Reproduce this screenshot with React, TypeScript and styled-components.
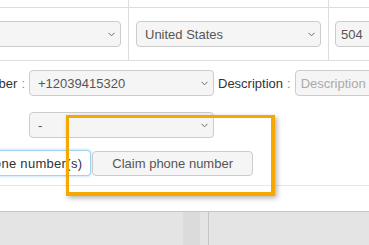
import React from "react";
import styled, { createGlobalStyle } from "styled-components";

const Global = createGlobalStyle`
  html, body { margin: 0; padding: 0; background: #ffffff; }
  body { font-family: "Liberation Sans", Arial, sans-serif; font-size: 13px; color: #333; overflow: hidden; }
  * { box-sizing: border-box; }
`;

const Page = styled.div`
  position: relative;
  width: 369px;
  height: 245px;
  overflow: hidden;
  display: flex;
  flex-direction: column;
`;

const Table = styled.div`
  display: grid;
  grid-template-columns: 208px 200px 200px;
  margin-left: -80px;
`;

const Cell = styled.div<{ $top?: boolean; $divided?: boolean; $pl?: number; $pr?: number }>`
  height: ${(p) => (p.$top ? 8 : 53)}px;
  border-bottom: 1px solid #dddddd;
  border-left: ${(p) => (p.$divided ? "1px solid #dddddd" : "none")};
  padding-left: ${(p) => p.$pl ?? 0}px;
  padding-right: ${(p) => p.$pr ?? 0}px;
  display: flex;
  align-items: center;
`;

const SelectWrap = styled.div<{ $w?: number }>`
  position: relative;
  flex: 0 0 auto;
  width: ${(p) => (p.$w ? `${p.$w}px` : "100%")};
  height: 26px;
`;

const Select = styled.select`
  appearance: none;
  -webkit-appearance: none;
  width: 100%;
  height: 100%;
  margin: 0;
  padding: 0 24px 0 8px;
  border: 1px solid #cccccc;
  border-radius: 4px;
  background: #f5f5f5;
  color: #555555;
  font-family: "Liberation Sans", Arial, sans-serif;
  font-size: 13px;
  outline: none;
`;

const Chevron = styled.svg`
  position: absolute;
  right: 6px;
  top: 50%;
  margin-top: -2px;
  width: 7px;
  height: 5px;
  pointer-events: none;
`;

const TextInput = styled.input<{ $w: number }>`
  flex: 0 0 auto;
  width: ${(p) => p.$w}px;
  height: 26px;
  margin: 0;
  padding: 0 5px;
  border: 1px solid #cccccc;
  border-radius: 4px;
  background: #f5f5f5;
  color: #555555;
  font-family: "Liberation Sans", Arial, sans-serif;
  font-size: 13px;
  outline: none;
  &::placeholder { color: #aaaaaa; }
`;

const Form = styled.div`
  padding-top: 9px;
  display: flex;
  flex-direction: column;
`;

const FormRow = styled.div<{ $mt?: number }>`
  display: flex;
  align-items: center;
  gap: 4px;
  margin-top: ${(p) => p.$mt ?? 0}px;
`;

const Label = styled.div<{ $w?: number }>`
  display: flex;
  justify-content: flex-end;
  flex: 0 0 auto;
  width: ${(p) => (p.$w ? `${p.$w}px` : "auto")};
  white-space: nowrap;
  color: #333333;
  font-size: 13px;
`;

const Colon = styled.span`
  color: #8a8a8a;
  margin-left: 4px;
`;

const ButtonRow = styled.div`
  display: flex;
  justify-content: flex-end;
  align-items: center;
  width: 253px;
  gap: 1px;
  margin-top: 12px;
  height: 26px;
`;

const Button = styled.button<{ $focused?: boolean }>`
  flex: 0 0 auto;
  height: ${(p) => (p.$focused ? 26 : 25)}px;
  margin: 0;
  padding: ${(p) => (p.$focused ? "0 8px 0 12px" : "0 19px")};
  border: 1px solid ${(p) => (p.$focused ? "#9fd3ef" : "#cccccc")};
  border-radius: 4px;
  background: ${(p) => (p.$focused ? "#ffffff" : "#f5f5f5")};
  box-shadow: ${(p) => (p.$focused ? "0 0 3px rgba(102,175,233,0.6)" : "none")};
  color: ${(p) => (p.$focused ? "#333333" : "#555555")};
  font-family: "Liberation Sans", Arial, sans-serif;
  font-size: 13px;
  letter-spacing: ${(p) => (p.$focused ? "0.3px" : "0")};
  white-space: nowrap;
`;

const Separator = styled.div`
  height: 1px;
  margin-top: 9px;
  background: #e8e8e8;
`;

const Footer = styled.div`
  margin-top: 25px;
  flex: 1;
  display: flex;
  border-top: 1px solid #c6c6c6;
  background: #e4e4e4;
`;

const Pane = styled.div<{ $w?: number }>`
  flex: ${(p) => (p.$w ? `0 0 ${p.$w}px` : "1")};
`;

const Stripe = styled.div`
  flex: 0 0 17px;
  background: #dbdbdb;
`;

const Divider = styled.div`
  flex: 0 0 1px;
  background: #c4c4c4;
`;

const Highlight = styled.div`
  position: absolute;
  left: 66px;
  top: 115px;
  width: 209px;
  height: 81px;
  border: 3px solid #f5a800;
  border-right-width: 4px;
  border-bottom-width: 4px;
  box-shadow: 2px 2px 5px rgba(0, 0, 0, 0.3);
  pointer-events: none;
`;

const Dropdown: React.FC<{ value: string; w?: number }> = ({ value, w }) => (
  <SelectWrap $w={w}>
    <Select defaultValue={value}>
      <option value={value}>{value}</option>
    </Select>
    <Chevron viewBox="0 0 7 5">
      <path d="M0.5 0.8 L3.5 3.8 L6.5 0.8" fill="none" stroke="#666" strokeWidth="1" />
    </Chevron>
  </SelectWrap>
);

export default function App() {
  return (
    <>
      <Global />
      <Page>
        <Table>
          <Cell $top />
          <Cell $top $divided />
          <Cell $top $divided />
          <Cell $pl={20} $pr={7}>
            <Dropdown value="" />
          </Cell>
          <Cell $divided $pl={7}>
            <Dropdown value="United States" w={185} />
          </Cell>
          <Cell $divided $pl={6}>
            <TextInput $w={120} defaultValue="504" />
          </Cell>
        </Table>
        <Form>
          <FormRow>
            <Label $w={25}>
              Phone number<Colon>:</Colon>
            </Label>
            <Dropdown value="+12039415320" w={185} />
            <Label>
              Description<Colon>:</Colon>
            </Label>
            <TextInput $w={120} placeholder="Description" />
          </FormRow>
          <FormRow $mt={16}>
            <Label $w={25} />
            <Dropdown value="-" w={185} />
          </FormRow>
          <ButtonRow>
            <Button $focused>Search phone number(s)</Button>
            <Button>Claim phone number</Button>
          </ButtonRow>
        </Form>
        <Separator />
        <Footer>
          <Pane $w={183} />
          <Stripe />
          <Pane $w={8} />
          <Divider />
          <Pane />
        </Footer>
        <Highlight />
      </Page>
    </>
  );
}
